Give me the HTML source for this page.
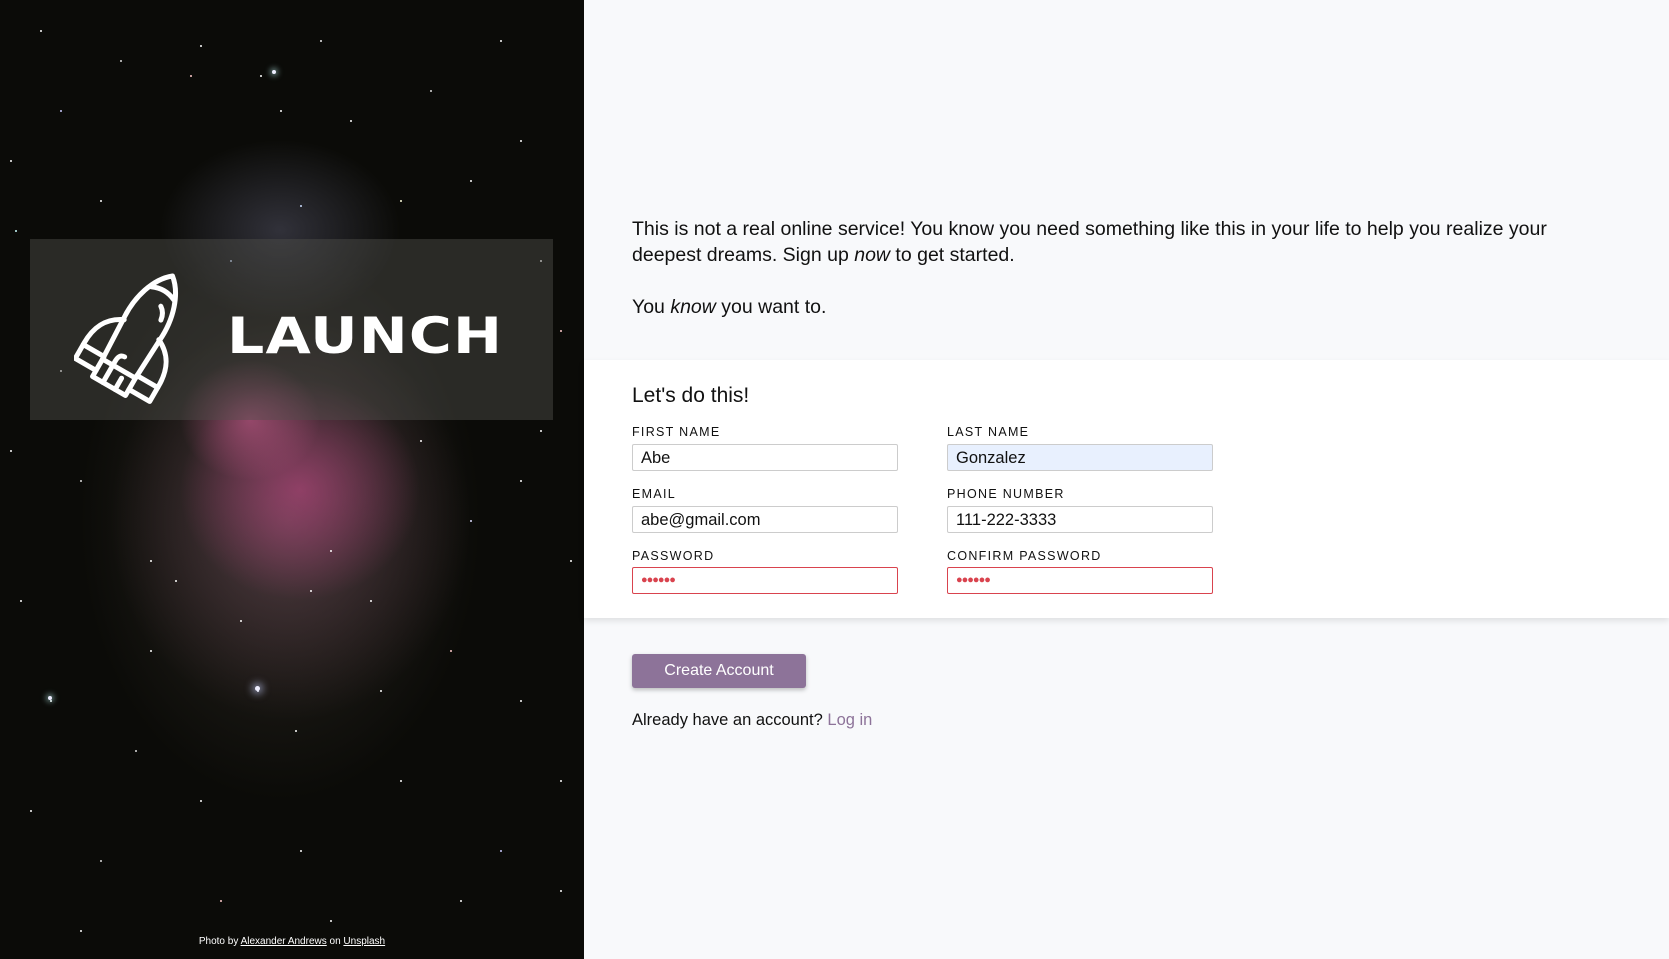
<!DOCTYPE html>
<html><head><meta charset="utf-8"><style>
*{box-sizing:border-box;margin:0;padding:0}
html,body{width:1669px;height:959px;overflow:hidden;background:#f8f9fb;font-family:"Liberation Sans",Arial,sans-serif;color:#111}
#left{position:absolute;left:0;top:0;width:584px;height:959px;overflow:hidden;
background:
radial-gradient(ellipse 70px 60px at 250px 420px,rgba(200,90,140,.6),transparent),
radial-gradient(ellipse 120px 110px at 300px 490px,rgba(190,70,130,.6),transparent),
radial-gradient(ellipse 180px 200px at 290px 520px,rgba(120,80,100,.5),transparent),
radial-gradient(ellipse 120px 90px at 280px 230px,rgba(120,120,150,.35),transparent),
radial-gradient(ellipse 200px 280px at 280px 520px,rgba(90,80,70,.4),transparent),
#0b0b08}
.stars{position:absolute;left:0;top:0;width:2px;height:2px;border-radius:50%;background:transparent}
#logo{position:absolute;left:30px;top:239px;width:523px;height:181px;background:rgba(80,80,75,.45)}
#logo .t{position:absolute;left:197px;top:77px;font-family:"DejaVu Sans","Liberation Sans",sans-serif;font-weight:bold;font-size:50px;color:#fff;letter-spacing:1px;transform:scaleX(1.17);transform-origin:left top;line-height:40px}
#credit{position:absolute;left:0;width:584px;top:936px;text-align:center;font-size:10px;color:#fff}
#credit u{color:#fff}
.intro{position:absolute;left:632px;top:216px;width:940px;font-size:19.5px;line-height:26px}
.intro p{margin-bottom:26px}
#box{position:absolute;left:584px;top:360px;width:1085px;height:258px;background:#fff;box-shadow:0 3px 6px rgba(0,0,0,.1)}
h2{position:absolute;left:632px;top:384px;font-size:21px;font-weight:normal}
label{position:absolute;font-size:12.5px;letter-spacing:1.3px;color:#111}
.in{position:absolute;width:266px;height:27px;border:1px solid #ccc;border-radius:2px;font-size:16.5px;padding:4px 8px;background:#fff;line-height:18px}
.err{border-color:#d9434e;color:#d9434e;font-size:11px;letter-spacing:-1px;line-height:16px}
#btn{position:absolute;left:632px;top:654px;width:174px;height:34px;background:#8d7399;color:#fff;border-radius:3px;font-size:16px;text-align:center;line-height:34px;box-shadow:0 2px 4px rgba(0,0,0,.25)}
#already{position:absolute;left:632px;top:711px;font-size:16.5px}
#already span{color:#8d7399}
</style></head><body>
<div id="left">
<div class="stars" style="box-shadow:
40px 30px #fff,120px 60px #ddd,200px 45px #fff,260px 75px #fff,320px 40px #eee,350px 120px #fff,280px 110px #fff,190px 75px #fcc,60px 110px #ccf,500px 40px #fff,520px 140px #fff,430px 90px #ddd,470px 180px #fff,15px 230px #cff,100px 200px #fff,400px 200px #ffd,540px 260px #fff,560px 330px #fcc,10px 450px #fff,80px 480px #ddd,150px 560px #fff,420px 440px #fff,470px 520px #ddf,520px 480px #fff,330px 550px #fff,175px 580px #fff,257px 690px #fff,295px 730px #fff,50px 700px #fff,135px 750px #ddd,370px 600px #fff,450px 650px #fcc,520px 700px #fff,560px 780px #fff,30px 810px #fff,100px 860px #ddd,200px 800px #fff,300px 850px #fff,400px 780px #fff,460px 900px #fff,80px 930px #fff,500px 850px #ccf,560px 890px #fff,220px 900px #fcc,330px 920px #fff,150px 650px #fff,380px 690px #fff,20px 600px #fff,570px 560px #fff,240px 620px #fff,310px 590px #fff,60px 370px #fff,540px 430px #fff,10px 160px #fff,230px 260px #cdf,300px 205px #cdf;"></div>
<div class="stars" style="width:5px;height:5px;left:255px;top:686px;background:#eef;box-shadow:0 0 8px 3px rgba(200,210,255,.6)"></div>
<div class="stars" style="width:4px;height:4px;left:272px;top:70px;background:#eef;box-shadow:0 0 6px 2px rgba(200,255,255,.5)"></div>
<div class="stars" style="width:4px;height:4px;left:48px;top:696px;background:#eef;box-shadow:0 0 6px 2px rgba(200,255,255,.5)"></div>
<div id="logo">
<svg style="position:absolute;left:44px;top:20px" width="130" height="150" viewBox="0 0 130 150">
<g fill="none" stroke="#fff" stroke-width="5" stroke-linecap="round" stroke-linejoin="round" transform="rotate(30 65 75)">
<path d="M65 8 C80 20 88 45 86 70 L84 115 L46 115 L44 70 C42 45 50 20 65 8 Z"/>
<path d="M52 28 Q65 22 78 28"/>
<path d="M70 40 Q76 44 77 52"/>
<path d="M45 70 C28 78 22 92 22 110 L22 128 L46 128"/>
<path d="M85 70 C102 78 108 92 108 110 L108 128 L84 128"/>
<path d="M22 112 L46 112"/><path d="M108 112 L84 112"/>
<path d="M46 115 L46 135 L84 135 L84 115"/>
<path d="M58 135 L58 110 Q58 102 64 102"/>
<path d="M72 135 L72 122"/>
</g></svg>
<div class="t">LAUNCH</div>
</div>
<div id="credit">Photo by <u>Alexander Andrews</u> on <u>Unsplash</u></div>
</div>
<div class="intro"><p>This is not a real online service! You know you need something like this in your life to help you realize your deepest dreams. Sign up <i>now</i> to get started.</p><p>You <i>know</i> you want to.</p></div>
<div id="box"></div>
<h2>Let's do this!</h2>
<label style="left:632px;top:425px">FIRST NAME</label>
<label style="left:947px;top:425px">LAST NAME</label>
<div class="in" style="left:632px;top:444px">Abe</div>
<div class="in" style="left:947px;top:444px;background:#e8f0fe">Gonzalez</div>
<label style="left:632px;top:487px">EMAIL</label>
<label style="left:947px;top:487px">PHONE NUMBER</label>
<div class="in" style="left:632px;top:506px">abe@gmail.com</div>
<div class="in" style="left:947px;top:506px">111-222-3333</div>
<label style="left:632px;top:549px">PASSWORD</label>
<label style="left:947px;top:549px">CONFIRM PASSWORD</label>
<div class="in err" style="left:632px;top:567px">●●●●●●</div>
<div class="in err" style="left:947px;top:567px">●●●●●●</div>
<div id="btn">Create Account</div>
<div id="already">Already have an account? <span>Log in</span></div>
</body></html>
